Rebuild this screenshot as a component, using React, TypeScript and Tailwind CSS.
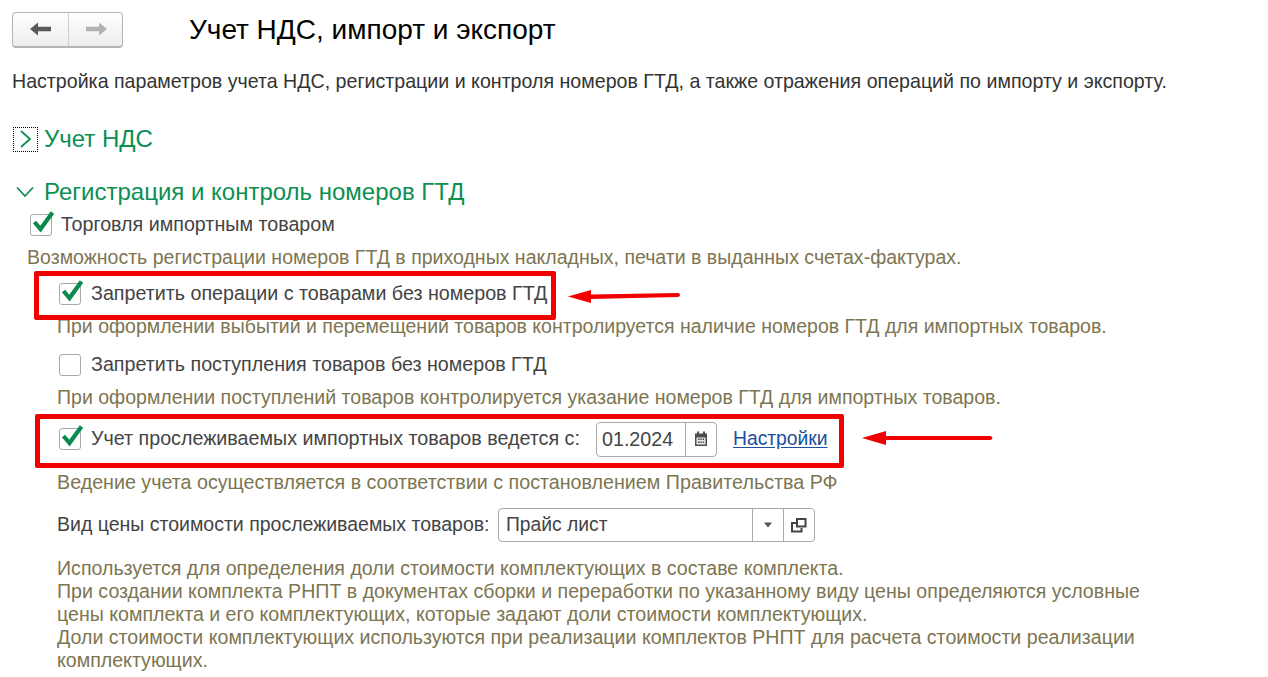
const hintColor = "text-[#7d7552]";

const CheckBox = ({ checked }: { checked: boolean }) => (
  <span className="relative block w-[22px] h-[22px] shrink-0 rounded-[3px] border border-[#a9a9a9] bg-white">
    {checked && (
      <svg className="absolute left-[1px] top-[-6px]" width="24" height="24" viewBox="0 0 24 24">
        <path d="M2.500 13 L8.500 20 L20.500 3.500" fill="none" stroke="#0b8a4f" strokeWidth="4.200" />
      </svg>
    )}
  </span>
);

const Hint = ({ className, children }: { className: string; children: React.ReactNode }) => (
  <p className={`leading-[23px] whitespace-nowrap ${hintColor} ${className}`}>{children}</p>
);

const App = () => {
  return (
    <div className="relative w-[1268px] h-[677px] overflow-hidden bg-white text-[19.7px] text-[#444444] font-['Liberation_Sans',Arial,sans-serif]">
      <header className="flex items-center h-[60px] pl-3">
        <div className="flex w-[111px] h-[36px] mt-[-1px] rounded-[4px] border border-[#b5b5b5] border-b-2 bg-gradient-to-b from-white to-[#ececec]">
          <button className="w-[56px] flex items-center justify-center border-r border-[#cfcfcf]">
            <svg width="22" height="14" viewBox="0 0 22 14">
              <path d="M0 7 L8 0.500 V4.800 H21 V9.200 H8 V13.500 Z" fill="#595959" />
            </svg>
          </button>
          <button className="flex-1 flex items-center justify-center">
            <svg width="22" height="14" viewBox="0 0 22 14">
              <path d="M22 7 L14 0.500 V4.800 H1 V9.200 H14 V13.500 Z" fill="#b3b3b3" />
            </svg>
          </button>
        </div>
        <h1 className="ml-[66px] text-[28px] leading-[32px] text-black">Учет НДС, импорт и экспорт</h1>
      </header>

      <p className="pl-3 mt-[10px] text-[19.63px] leading-[23px] whitespace-nowrap text-[#333333]">
        Настройка параметров учета НДС, регистрации и контроля номеров ГТД, а также отражения операций по импорту и экспорту.
      </p>

      <div className="flex items-center pl-[13px] mt-[30px] h-[32px] text-[#0b8f52]">
        <span className="w-[25px] h-[25px] flex items-center justify-center border border-dotted border-black">
          <svg width="13" height="18" viewBox="0 0 13 18">
            <path d="M2 1 L11 9 L2 17" fill="none" stroke="#0b8f52" strokeWidth="1.800" />
          </svg>
        </span>
        <span className="ml-[6px] text-[24px] leading-[28px]">Учет НДС</span>
      </div>

      <div className="flex items-center pl-[16px] mt-[21px] h-[32px] text-[#0b8f52]">
        <svg width="18" height="12" viewBox="0 0 18 12" className="shrink-0">
          <path d="M1 1.500 L9 10 L17 1.500" fill="none" stroke="#0b8f52" strokeWidth="1.800" />
        </svg>
        <span className="ml-[10px] text-[24px] leading-[28px]">Регистрация и контроль номеров ГТД</span>
      </div>

      <div className="flex items-center gap-[9px] pl-[30px] mt-[1px] h-[32px]">
        <CheckBox checked />
        <span>Торговля импортным товаром</span>
      </div>
      <Hint className="pl-[27px] mt-[5px] text-[19.55px]">Возможность регистрации номеров ГТД в приходных накладных, печати в выданных счетах-фактурах.</Hint>

      <div className="flex items-center gap-[10px] pl-[59px] mt-[9px] h-[32px]">
        <CheckBox checked />
        <span>Запретить операции с товарами без номеров ГТД</span>
      </div>
      <Hint className="pl-[57px] mt-[5px] text-[19.5px]">При оформлении выбытий и перемещений товаров контролируется наличие номеров ГТД для импортных товаров.</Hint>

      <div className="flex items-center gap-[10px] pl-[59px] mt-[11px] h-[32px]">
        <CheckBox checked={false} />
        <span>Запретить поступления товаров без номеров ГТД</span>
      </div>
      <Hint className="pl-[57px] mt-[5px] text-[19.55px]">При оформлении поступлений товаров контролируется указание номеров ГТД для импортных товаров.</Hint>

      <div className="flex items-center pl-[59px] mt-[12px] h-[36px]">
        <CheckBox checked />
        <span className="ml-[10px] w-[489px] whitespace-nowrap">Учет прослеживаемых импортных товаров ведется с:</span>
        <div className="flex ml-[16px] w-[121px] h-[35px] rounded-[4px] border border-[#a9a9a9]">
          <span className="flex-1 pl-[5px] leading-[33px]">01.2024</span>
          <span className="w-[31px] flex items-center justify-center border-l border-[#a9a9a9]">
            <svg width="14" height="16" viewBox="0 0 14 16">
              <path d="M1 2.500 H13 V15 H1 Z" fill="#4d4d4d" />
              <path d="M3 0.500 H5 V3.500 H3 Z M9 0.500 H11 V3.500 H9 Z" fill="#4d4d4d" />
              <path d="M2.500 6.500 H11.500 V13.500 H2.500 Z" fill="#e8e8e8" />
              <path d="M4 7.500 H5.500 V9 H4 Z M6.300 7.500 H7.800 V9 H6.300 Z M8.600 7.500 H10.100 V9 H8.600 Z M4 10.500 H5.500 V12 H4 Z M6.300 10.500 H7.800 V12 H6.300 Z M8.600 10.500 H10.100 V12 H8.600 Z" fill="#4d4d4d" />
            </svg>
          </span>
        </div>
        <a className="ml-[16px] text-[19.3px] text-[#1c4f9c] underline underline-offset-2">Настройки</a>
      </div>
      <Hint className="pl-[57px] mt-[14px] text-[19.7px]">Ведение учета осуществляется в соответствии с постановлением Правительства РФ</Hint>

      <div className="flex items-center pl-[57px] mt-[13px] h-[36px]">
        <span className="w-[441px] whitespace-nowrap text-[19.5px]">Вид цены стоимости прослеживаемых товаров:</span>
        <div className="flex w-[317px] h-[34px] rounded-[4px] border border-[#a9a9a9]">
          <span className="flex-1 pl-[7px] leading-[32px] text-[19.3px]">Прайс лист</span>
          <span className="w-[31px] flex items-center justify-center border-l border-[#a9a9a9]">
            <svg width="10" height="6" viewBox="0 0 10 6"><path d="M1 0.500 H9 L5 5.500 Z" fill="#555555" /></svg>
          </span>
          <span className="w-[31px] flex items-center justify-center border-l border-[#a9a9a9]">
            <svg width="16" height="16" viewBox="0 0 16 16">
              <path d="M1 6 H5 M1 5 V14.500 H10.500 V11" fill="none" stroke="#444444" strokeWidth="2" />
              <path d="M6 2 H14.500 V9.500 H6 Z" fill="none" stroke="#444444" strokeWidth="2" />
            </svg>
          </span>
        </div>
      </div>

      <Hint className="pl-[57px] mt-[14px] text-[19.6px]">
        Используется для определения доли стоимости комплектующих в составе комплекта.
        <br />
        При создании комплекта РНПТ в документах сборки и переработки по указанному виду цены определяются условные
        <br />
        цены комплекта и его комплектующих, которые задают доли стоимости комплектующих.
        <br />
        Доли стоимости комплектующих используются при реализации комплектов РНПТ для расчета стоимости реализации
        <br />
        комплектующих.
      </Hint>

      {/* red annotations drawn over the form */}
      <div className="absolute left-[34px] top-[271px] w-[522px] h-[49px] border-[5px] border-[#f00000] rounded-[2px]" />
      <div className="absolute left-[35px] top-[414px] w-[809px] h-[54px] border-[5px] border-[#f00000] rounded-[2px]" />
      <svg className="absolute left-[565px] top-[285px]" width="120" height="22" viewBox="0 0 120 22">
        <path d="M3 11.500 L26 5 V9.600 L113 8 Q115.500 8.500 115 10 Q115 11.500 113 12 L26 14 V18 Z" fill="#f00000" />
      </svg>
      <svg className="absolute left-[860px] top-[428px]" width="136" height="20" viewBox="0 0 136 20">
        <path d="M2 10 L26 3 V8 H130 Q132.500 8.500 132.500 10 Q132.500 11.500 130 12 H26 V17 Z" fill="#f00000" />
      </svg>
    </div>
  );
};

export default App;
